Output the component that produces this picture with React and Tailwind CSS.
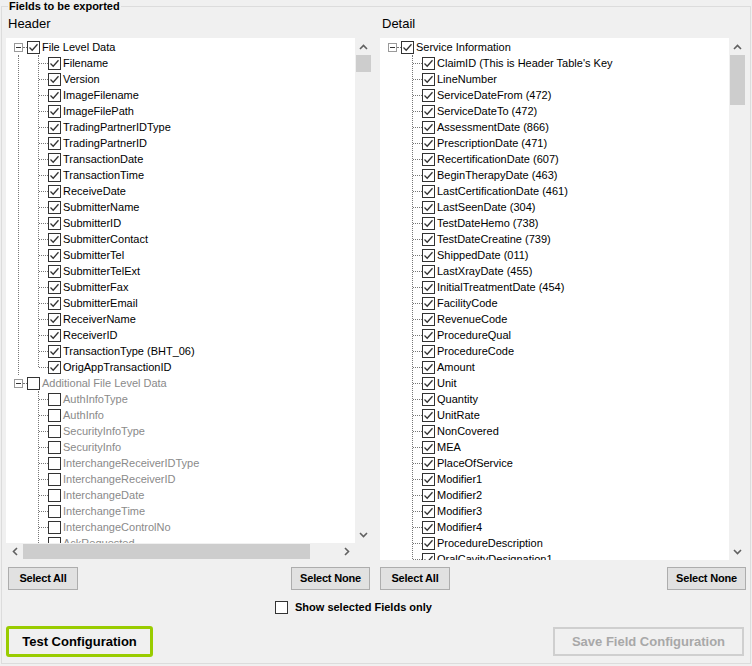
import React from "react";

const header1 = ["Filename","Version","ImageFilename","ImageFilePath","TradingPartnerIDType","TradingPartnerID","TransactionDate","TransactionTime","ReceiveDate","SubmitterName","SubmitterID","SubmitterContact","SubmitterTel","SubmitterTelExt","SubmitterFax","SubmitterEmail","ReceiverName","ReceiverID","TransactionType (BHT_06)","OrigAppTransactionID"];
const header2 = ["AuthInfoType","AuthInfo","SecurityInfoType","SecurityInfo","InterchangeReceiverIDType","InterchangeReceiverID","InterchangeDate","InterchangeTime","InterchangeControlNo","AckRequested"];
const detail = ["ClaimID (This is Header Table's Key","LineNumber","ServiceDateFrom (472)","ServiceDateTo (472)","AssessmentDate (866)","PrescriptionDate (471)","RecertificationDate (607)","BeginTherapyDate (463)","LastCertificationDate (461)","LastSeenDate (304)","TestDateHemo (738)","TestDateCreatine (739)","ShippedDate (011)","LastXrayDate (455)","InitialTreatmentDate (454)","FacilityCode","RevenueCode","ProcedureQual","ProcedureCode","Amount","Unit","Quantity","UnitRate","NonCovered","MEA","PlaceOfService","Modifier1","Modifier2","Modifier3","Modifier4","ProcedureDescription","OralCavityDesignation1"];

function Box({ checked }) {
  return (
    <div className="w-[13px] h-[13px] border border-[#333] bg-white flex items-center justify-center shrink-0">
      {checked && (
        <svg width="11" height="11" viewBox="0 0 11 11"><path d="M1.5 5.5 L4.2 8.2 L9.5 2.2" fill="none" stroke="#333" strokeWidth="1.3" /></svg>
      )}
    </div>
  );
}

function Group({ title, items, checked, last }) {
  const col = checked ? "text-black" : "text-[#8a8a8a]";
  return (
    <div className="relative">
      <div className="flex items-center h-4">
        <div className="w-[9px] h-[9px] border border-[#9a9a9a] bg-white ml-[8px] flex items-center justify-center">
          <div className="w-[5px] h-px bg-[#333]" />
        </div>
        <div className="w-[4px] border-t border-dotted border-[#777]" />
        <Box checked={checked} />
        <span className={"ml-[2px] " + col}>{title}</span>
      </div>
      <div className="relative">
        {!last && <div className="absolute left-[12px] top-0 bottom-0 border-l border-dotted border-[#777]" />}
        <div className="absolute left-[32px] top-0 bottom-[8px] border-l border-dotted border-[#777]" />
        {items.map((t) => (
          <div key={t} className="flex items-center h-4">
            <div className="ml-[33px] w-[9px] border-t border-dotted border-[#777]" />
            <Box checked={checked} />
            <span className={"ml-[2px] whitespace-nowrap " + col}>{t}</span>
          </div>
        ))}
      </div>
    </div>
  );
}

function VScroll({ thumbH }) {
  return (
    <div className="w-[17px] bg-[#f0f0f0] flex flex-col items-center relative shrink-0">
      <div className="h-[17px] flex items-center justify-center">
        <svg width="9" height="6" viewBox="0 0 9 6"><path d="M1 5 L4.5 1.5 L8 5" fill="none" stroke="#606060" strokeWidth="1.6" /></svg>
      </div>
      <div className={"w-[15px] bg-[#cdcdcd] " + thumbH} />
      <div className="flex-1" />
      <div className="h-[17px] flex items-center justify-center">
        <svg width="9" height="6" viewBox="0 0 9 6"><path d="M1 1 L4.5 4.5 L8 1" fill="none" stroke="#606060" strokeWidth="1.6" /></svg>
      </div>
    </div>
  );
}

function Btn({ children, w }) {
  return (
    <button className={"h-[23px] border border-[#adadad] bg-[#e1e1e1] text-[11px] font-bold text-black tracking-[-0.2px] " + w}>{children}</button>
  );
}

export default function App() {
  return (
    <div className="w-[752px] h-[666px] bg-[#f0f0f0] relative overflow-hidden text-[11px] text-black" style={{ fontFamily: "'Liberation Sans',Arial,sans-serif" }}>
      <div className="absolute left-[1px] right-[1px] top-[6px] bottom-[2px] border border-[#dcdcdc]" />
      <div className="absolute left-[8px] top-0 px-[1px] bg-[#f0f0f0] font-bold text-[11px] leading-[13px]">Fields to be exported</div>
      <div className="relative pt-[16px] px-[6px]">
        <div className="flex gap-[8px]">
          <div className="w-[366px]">
            <div className="text-[13px] leading-[16px] h-[22px] pl-[2px]">Header</div>
            <div className="h-[522px] bg-white flex flex-col">
              <div className="flex flex-1 overflow-hidden">
                <div className="flex-1 overflow-hidden pt-px">
                  <Group title="File Level Data" items={header1} checked />
                  <Group title="Additional File Level Data" items={header2} checked={false} last />
                </div>
                <VScroll thumbH="h-[17px]" />
              </div>
              <div className="h-[17px] bg-[#f0f0f0] flex items-center">
                <div className="w-[17px] flex justify-center"><svg width="6" height="9" viewBox="0 0 6 9"><path d="M5 1 L1.5 4.5 L5 8" fill="none" stroke="#606060" strokeWidth="1.6" /></svg></div>
                <div className="w-[287px] h-[15px] bg-[#cdcdcd]" />
                <div className="flex-1" />
                <div className="w-[17px] flex justify-center mr-[17px]"><svg width="6" height="9" viewBox="0 0 6 9"><path d="M1 1 L4.5 4.5 L1 8" fill="none" stroke="#606060" strokeWidth="1.6" /></svg></div>
              </div>
            </div>
          </div>
          <div className="w-[366px]">
            <div className="text-[13px] leading-[16px] h-[22px] pl-[2px]">Detail</div>
            <div className="h-[522px] bg-white flex">
              <div className="flex-1 overflow-hidden pt-px">
                <Group title="Service Information" items={detail} checked last />
              </div>
              <VScroll thumbH="h-[50px]" />
            </div>
          </div>
        </div>
        <div className="flex gap-[8px] mt-[7px]">
          <div className="w-[366px] flex justify-between px-[2px]">
            <Btn w="w-[70px]">Select All</Btn>
            <Btn w="w-[79px]">Select None</Btn>
          </div>
          <div className="w-[366px] flex justify-between">
            <Btn w="w-[70px]">Select All</Btn>
            <Btn w="w-[79px]">Select None</Btn>
          </div>
        </div>
        <div className="flex items-center gap-[7px] mt-[10px] h-[14px] pl-[269px]">
          <Box checked={false} />
          <span className="font-bold">Show selected Fields only</span>
        </div>
        <div className="flex justify-between items-center mt-[12px]">
          <button className="w-[147px] h-[31px] border-[3px] border-[#99cc00] rounded-[3px] bg-[#f0f0f0] text-[13px] font-bold">Test Configuration</button>
          <button className="w-[191px] h-[29px] border-2 border-[#cfcfcf] bg-[#f0f0f0] text-[13px] font-bold text-[#a8a8a8] mr-[2px]">Save Field Configuration</button>
        </div>
      </div>
    </div>
  );
}
